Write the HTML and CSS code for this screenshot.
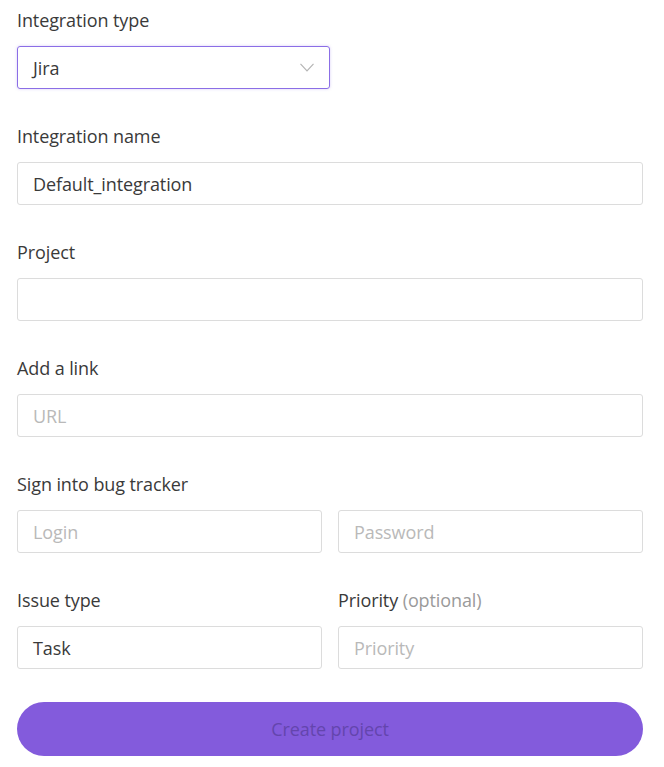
FILE: index.html
```html
<!DOCTYPE html>
<html>
<head>
<meta charset="utf-8">
<link rel="stylesheet" href="styles.css">
</head>
<body>
<form class="form">
  <div class="field">
    <label class="label">Integration type</label>
    <div class="select">
      <span class="value">Jira</span>
      <svg class="chevron" width="14" height="9" viewBox="0 0 14 9"><path d="M0.5 0.8 L7 7.8 L13.5 0.8" fill="none" stroke="#b5b5b5" stroke-width="1.2"/></svg>
    </div>
  </div>
  <div class="field">
    <label class="label">Integration name</label>
    <div class="input"><span class="value">Default_integration</span></div>
  </div>
  <div class="field">
    <label class="label">Project</label>
    <div class="input"></div>
  </div>
  <div class="field">
    <label class="label">Add a link</label>
    <div class="input"><span class="placeholder">URL</span></div>
  </div>
  <div class="field">
    <label class="label">Sign into bug tracker</label>
    <div class="row">
      <div class="input"><span class="placeholder">Login</span></div>
      <div class="input"><span class="placeholder">Password</span></div>
    </div>
  </div>
  <div class="row">
    <div class="field">
      <label class="label">Issue type</label>
      <div class="input"><span class="value">Task</span></div>
    </div>
    <div class="field">
      <label class="label">Priority <span class="optional">(optional)</span></label>
      <div class="input"><span class="placeholder">Priority</span></div>
    </div>
  </div>
  <button type="button" class="submit">Create project</button>
</form>
</body>
</html>
```
FILE: styles.css
```css
html, body {
  margin: 0;
  padding: 0;
  background: #ffffff;
}
body {
  font-family: "Open Sans", "Noto Sans", sans-serif;
  color: #3a3a3a;
}
.form {
  width: 626px;
  padding: 8px 0 0 17px;
  display: flex;
  flex-direction: column;
  gap: 35px;
}
.field {
  display: flex;
  flex-direction: column;
  gap: 14px;
  min-width: 0;
}
.label {
  font-size: 18px;
  line-height: 24px;
  height: 24px;
  color: #3a3a3a;
  letter-spacing: -0.1px;
}
.optional {
  color: #9a9a9a;
}
.row {
  display: grid;
  grid-template-columns: 1fr 1fr;
  gap: 16px;
}
.input, .select {
  box-sizing: border-box;
  height: 43px;
  border: 1px solid #dcdcdc;
  border-radius: 3px;
  display: flex;
  align-items: center;
  padding: 0 15px;
  font-size: 18px;
  letter-spacing: -0.1px;
}
.select {
  width: 313px;
  border-color: #8b6ee6;
  box-shadow: 0 0 3px rgba(139, 110, 230, 0.35);
  justify-content: space-between;
}
.value {
  color: #3a3a3a;
}
.placeholder {
  color: #b9b9b9;
}
.submit {
  margin-top: -2px;
  height: 54px;
  border: none;
  border-radius: 27px;
  background: #835bdc;
  color: #6445ad;
  font-family: "Open Sans", "Noto Sans", sans-serif;
  font-size: 18px;
  letter-spacing: -0.1px;
  padding: 0;
}
```
